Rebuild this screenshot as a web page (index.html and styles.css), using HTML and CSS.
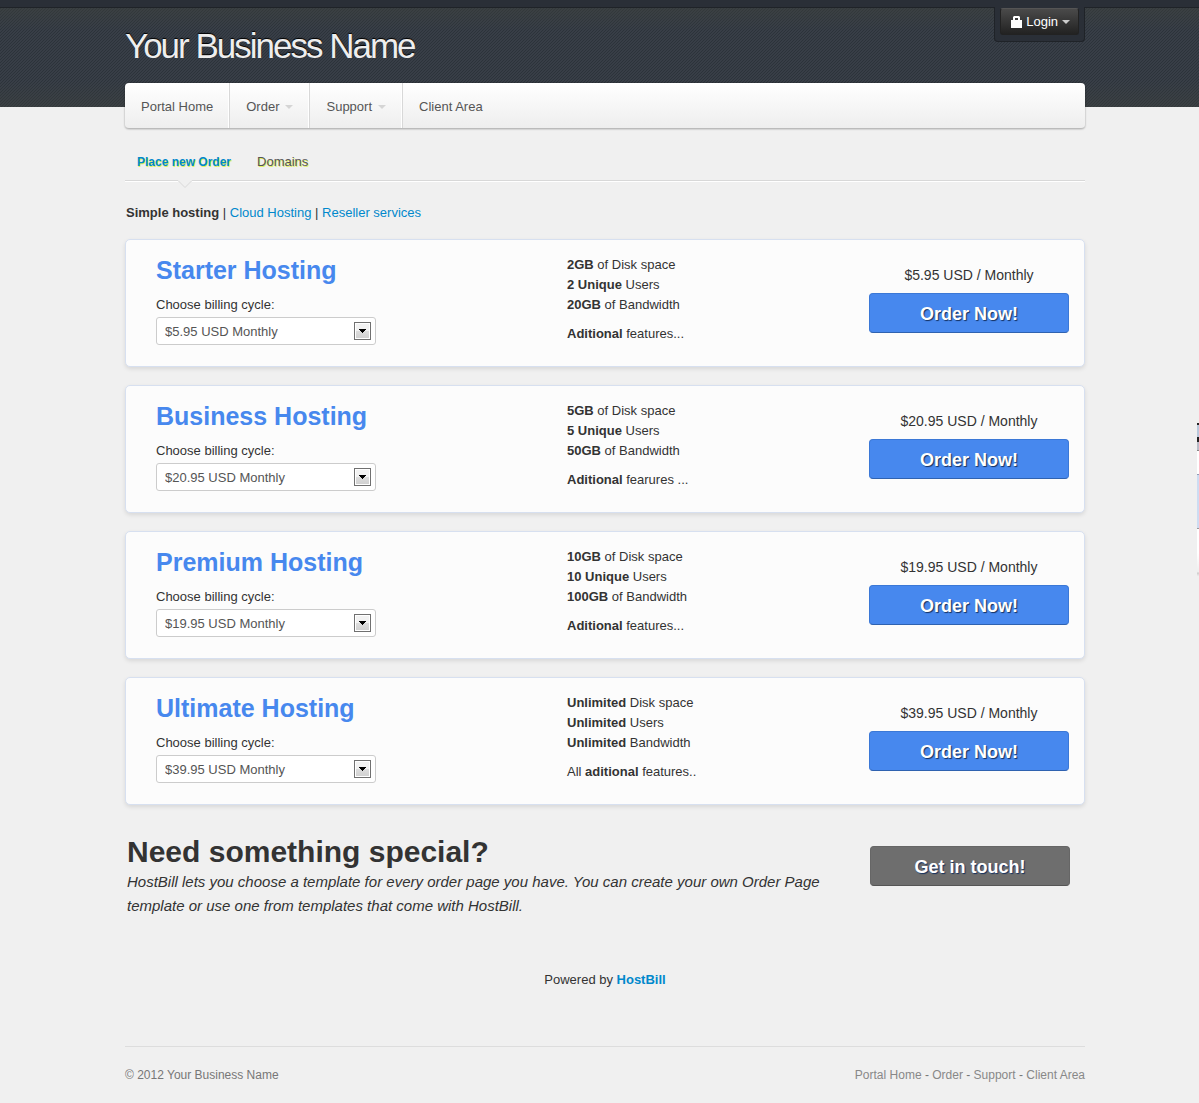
FILE: index.html
```
<!DOCTYPE html>
<html lang="en">
<head>
<meta charset="utf-8">
<meta name="viewport" content="width=device-width, initial-scale=1">
<title>Your Business Name</title>
<link rel="stylesheet" href="styles.css">
</head>
<body>
<header class="header">
  <div class="topbar"></div>
  <div class="container masthead">
    <h1 class="brand">Your Business Name</h1>
    <div class="login-tab">
      <button class="login" type="button">
        <svg width="11" height="12" viewBox="0 0 11 12" aria-hidden="true"><path fill="#fff" fill-rule="evenodd" d="M0 4h2V1l1-1h5l1 1v3h2v8H0zM4 4h3V2H4z"/></svg>
        Login
        <svg width="8" height="4" viewBox="0 0 8 4" aria-hidden="true"><path fill="#ccc" d="M0 0h8L4 4z"/></svg>
      </button>
    </div>
  </div>
</header>
<main class="container">
  <nav class="mainnav">
    <a href="#">Portal Home</a>
    <a href="#">Order <svg width="8" height="4" viewBox="0 0 8 4" aria-hidden="true"><path fill="#d5d5d5" d="M0 0h8L4 4z"/></svg></a>
    <a href="#">Support <svg width="8" height="4" viewBox="0 0 8 4" aria-hidden="true"><path fill="#d5d5d5" d="M0 0h8L4 4z"/></svg></a>
    <a href="#">Client Area</a>
  </nav>
  <nav class="subnav">
    <a class="active" href="#">Place new Order<svg class="notch" width="14" height="8" viewBox="0 0 14 8" aria-hidden="true"><path fill="#f0f0f0" d="M0 0h14v1L7 8 0 1z"/><path fill="none" stroke="#d8d8d8" d="M0 .5l7 7 7-7"/></svg></a>
    <a href="#">Domains</a>
  </nav>
  <p class="categories"><strong>Simple hosting</strong> | <a href="#">Cloud Hosting</a> | <a href="#">Reseller services</a></p>

  <section class="plan">
    <div class="plan-info">
      <h2>Starter Hosting</h2>
      <label for="cycle1">Choose billing cycle:</label>
      <div class="picker"><select id="cycle1"><option>$5.95 USD Monthly</option></select><span class="arrow"><svg width="7" height="4" viewBox="0 0 7 4" aria-hidden="true"><path d="M0 0h7v1H6v1H5v1H4v1H3V3H2V2H1V1H0z"/></svg></span></div>
    </div>
    <div class="features">
      <p><b>2GB</b> of Disk space<br><b>2 Unique</b> Users<br><b>20GB</b> of Bandwidth</p>
      <p><b>Aditional</b> features...</p>
    </div>
    <div class="buy"><p>$5.95 USD / Monthly</p><button class="btn" type="button">Order Now!</button></div>
  </section>

  <section class="plan">
    <div class="plan-info">
      <h2>Business Hosting</h2>
      <label for="cycle2">Choose billing cycle:</label>
      <div class="picker"><select id="cycle2"><option>$20.95 USD Monthly</option></select><span class="arrow"><svg width="7" height="4" viewBox="0 0 7 4" aria-hidden="true"><path d="M0 0h7v1H6v1H5v1H4v1H3V3H2V2H1V1H0z"/></svg></span></div>
    </div>
    <div class="features">
      <p><b>5GB</b> of Disk space<br><b>5 Unique</b> Users<br><b>50GB</b> of Bandwidth</p>
      <p><b>Aditional</b> fearures ...</p>
    </div>
    <div class="buy"><p>$20.95 USD / Monthly</p><button class="btn" type="button">Order Now!</button></div>
  </section>

  <section class="plan">
    <div class="plan-info">
      <h2>Premium Hosting</h2>
      <label for="cycle3">Choose billing cycle:</label>
      <div class="picker"><select id="cycle3"><option>$19.95 USD Monthly</option></select><span class="arrow"><svg width="7" height="4" viewBox="0 0 7 4" aria-hidden="true"><path d="M0 0h7v1H6v1H5v1H4v1H3V3H2V2H1V1H0z"/></svg></span></div>
    </div>
    <div class="features">
      <p><b>10GB</b> of Disk space<br><b>10 Unique</b> Users<br><b>100GB</b> of Bandwidth</p>
      <p><b>Aditional</b> features...</p>
    </div>
    <div class="buy"><p>$19.95 USD / Monthly</p><button class="btn" type="button">Order Now!</button></div>
  </section>

  <section class="plan">
    <div class="plan-info">
      <h2>Ultimate Hosting</h2>
      <label for="cycle4">Choose billing cycle:</label>
      <div class="picker"><select id="cycle4"><option>$39.95 USD Monthly</option></select><span class="arrow"><svg width="7" height="4" viewBox="0 0 7 4" aria-hidden="true"><path d="M0 0h7v1H6v1H5v1H4v1H3V3H2V2H1V1H0z"/></svg></span></div>
    </div>
    <div class="features">
      <p><b>Unlimited</b> Disk space<br><b>Unlimited</b> Users<br><b>Unlimited</b> Bandwidth</p>
      <p>All <b>aditional</b> features..</p>
    </div>
    <div class="buy"><p>$39.95 USD / Monthly</p><button class="btn" type="button">Order Now!</button></div>
  </section>

  <section class="special">
    <div class="special-text">
      <h2>Need something special?</h2>
      <p>HostBill lets you choose a template for every order page you have. You can create your own Order Page template or use one from templates that come with HostBill.</p>
    </div>
    <button class="btn btn-grey" type="button">Get in touch!</button>
  </section>
  <p class="powered">Powered by <a href="#">HostBill</a></p>
</main>
<footer class="container">
  <div class="footer">
    <span>© 2012 Your Business Name</span>
    <span><a href="#">Portal Home</a> - <a href="#">Order</a> - <a href="#">Support</a> - <a href="#">Client Area</a></span>
  </div>
</footer>
<div class="edge" aria-hidden="true"></div>
</body>
</html>
```
FILE: styles.css
```
* { box-sizing: border-box; }
body {
  position: relative;
  margin: 0;
  background: #f0f0f0;
  color: #333;
  font: 13px/20px "Liberation Sans", Arial, sans-serif;
}
h1, h2, p { margin: 0; }
a { color: #08c; text-decoration: none; }
button, select { font-family: inherit; }
.container {
  max-width: 971px;
  margin: 0 auto;
  padding-left: 11px;
}
.header {
  height: 107px;
  background:
    linear-gradient(rgba(62, 66, 60, .6), rgba(62, 66, 60, 0) 30px 80px, rgba(62, 66, 60, .4)),
    linear-gradient(135deg, #383e47 40%, #2c333a 40% 60%, #383e47 60%) 0 0 / 3px 3px;
}
.topbar {
  height: 8px;
  background: #2a2f37;
  border-bottom: 1px solid #1f2328;
}
.masthead {
  display: flex;
  justify-content: space-between;
  align-items: flex-start;
}
.brand {
  padding-top: 18px;
  color: #eee;
  font-size: 35px;
  font-weight: 400;
  line-height: 40px;
  letter-spacing: -2px;
  text-shadow: 0 -1px 1px #000;
}
.login-tab {
  margin-top: -1px;
  padding: 1px 5px 6px;
  background: #2a2f37;
  border: 1px solid #1f2328;
  border-top: 0;
  border-radius: 0 0 4px 4px;
}
.login {
  display: flex;
  align-items: center;
  gap: 4px;
  height: 27px;
  padding: 0 8px 0 10px;
  border: 1px solid #222;
  border-top-color: #555;
  border-radius: 3px;
  background: linear-gradient(#4a4a4a, #222);
  color: #fff;
  font-size: 13px;
}
.mainnav {
  display: flex;
  height: 46px;
  margin-top: -24px;
  border-bottom: 1px solid #bbb;
  border-radius: 4px;
  background: linear-gradient(#fff, #eee);
  box-shadow: 0 0 2px rgba(0, 0, 0, .4);
}
.mainnav a {
  display: flex;
  align-items: center;
  gap: 6px;
  padding: 2px 16px 0;
  border-right: 1px solid #d8d8d8;
  box-shadow: inset -1px 0 #fff;
  color: #555;
}
.mainnav a:last-child { border: 0; box-shadow: none; }
.subnav {
  display: flex;
  gap: 26px;
  height: 53px;
  padding: 23px 12px 0;
  border-bottom: 1px solid #fff;
  box-shadow: inset 0 -1px #d8d8d8;
}
.subnav a {
  position: relative;
  color: #555;
  text-shadow: 1px 1px #e0f060;
}
.subnav .active { color: #08c; font-size: 12px; font-weight: 700; }
.notch { position: absolute; top: 28px; left: 41px; }
.categories { padding: 21px 1px 16px; }
.plan {
  display: flex;
  align-items: flex-start;
  min-height: 128px;
  margin-bottom: 18px;
  padding: 15px 15px 15px 30px;
  border: 1px solid #d7e0f0;
  border-radius: 5px;
  background: #fcfcfc;
  box-shadow: 0 2px 4px rgba(0, 0, 0, .1);
}
.plan-info { flex: 0 1 411px; }
.plan h2 {
  margin-bottom: 10px;
  color: #4788ee;
  font-size: 25px;
  line-height: 30px;
}
.plan label { display: block; }
.picker { position: relative; width: 220px; margin-top: 2px; }
.picker select {
  display: block;
  width: 100%;
  height: 28px;
  padding: 0 8px;
  border: 1px solid #ccc;
  border-radius: 3px;
  background: #fff;
  color: #555;
  font-size: 13px;
  appearance: none;
}
.arrow {
  position: absolute;
  top: 5px;
  right: 5px;
  display: grid;
  place-items: center;
  width: 17px;
  height: 18px;
  border: 1px solid #707070;
  background: linear-gradient(#f2f2f2 50%, #ddd 50%, #cfcfcf);
  box-shadow: inset 0 0 0 1px #fff;
  pointer-events: none;
}
.features { flex: 1; }
.features p + p { margin-top: 9px; }
.buy {
  width: 200px;
  padding-top: 10px;
  font-size: 14px;
  text-align: center;
}
.buy p { margin-bottom: 8px; }
.btn {
  display: block;
  width: 200px;
  height: 40px;
  padding: 2px 0 0;
  border: 1px solid #3b78d6;
  border-bottom-color: #2f62b0;
  border-radius: 4px;
  background: #4788ee;
  color: #fff;
  font-size: 18px;
  font-weight: 700;
  text-shadow: 1px 1px 1px #14305f;
}
.btn-grey {
  border-color: #666;
  border-bottom-color: #555;
  background: #6e6e6e;
}
.special {
  display: flex;
  align-items: flex-start;
  justify-content: space-between;
  padding: 11px 15px 0 2px;
}
.special-text { flex: 0 1 700px; }
.special h2 { font-size: 30px; line-height: 36px; }
.special p { font-size: 15px; font-style: italic; line-height: 24px; }
.special .btn { flex: none; margin-top: 12px; }
.powered { padding: 52px 0 56px; text-align: center; }
.powered a { font-weight: 700; }
.footer {
  display: flex;
  justify-content: space-between;
  padding: 18px 0;
  border-top: 1px solid #ddd;
  color: #777;
  font-size: 12px;
}
.footer a { color: #888; }
.edge {
  position: absolute;
  top: 423px;
  right: 0;
  width: 2px;
  height: 153px;
  background: linear-gradient(#222 2px, #b8c8dc 2px 14px, #222 14px 19px, #b8bcc8 19px 27px, #888 27px 28px, #fff 28px 51px, #8e9bb5 51px 52px, #cddcf2 52px 105px, #999 105px 106px, #fff 106px 130px, #eee 149px, #ccc 150px, #eee);
}
```
